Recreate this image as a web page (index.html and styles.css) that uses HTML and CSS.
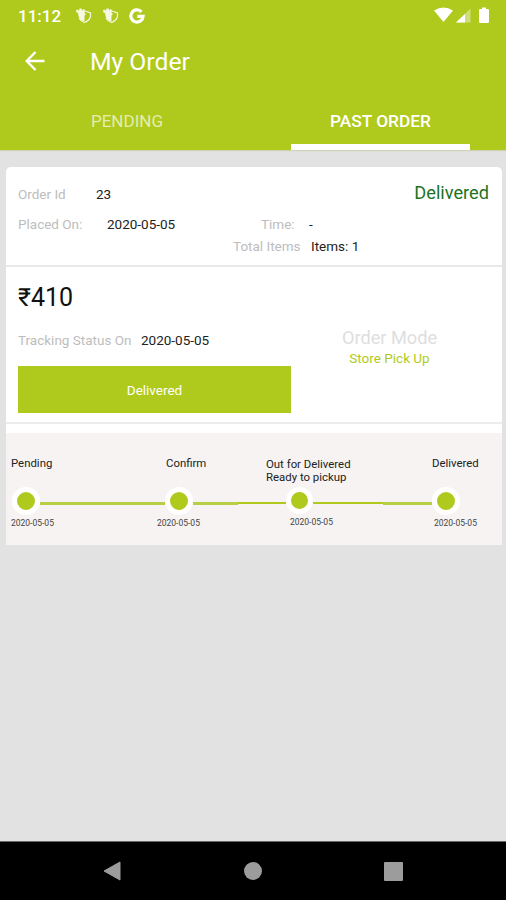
FILE: index.html
```html
<!DOCTYPE html>
<html lang="en">
<head>
<meta charset="utf-8">
<title>My Order</title>
<link rel="stylesheet" href="styles.css">
</head>
<body>
<div class="screen">
  <header class="header">
    <div class="status">
      <span class="clock">11:12</span>
      <svg class="shield" viewBox="0 0 18 18"><path d="M10 4 L15.500 6 V9.500 Q14.500 13.500 9.500 15.500 Q5.500 14 4 11" fill="none" stroke="#fff" stroke-width="1.200" opacity=".85"/><path d="M1 3 L3 2.500 L4 4 L4.500 1.500 L6.500 1.500 L7.500 3.500 L8.500 2 L10 3 L9.500 6 L11 7 L9.500 8.500 V14.500 Q4.500 13 3.500 9 L3 6 L1.500 5.500Z" fill="#fff" opacity=".88"/></svg>
      <svg class="shield" viewBox="0 0 18 18"><path d="M10 4 L15.500 6 V9.500 Q14.500 13.500 9.500 15.500 Q5.500 14 4 11" fill="none" stroke="#fff" stroke-width="1.200" opacity=".85"/><path d="M1 3 L3 2.500 L4 4 L4.500 1.500 L6.500 1.500 L7.500 3.500 L8.500 2 L10 3 L9.500 6 L11 7 L9.500 8.500 V14.500 Q4.500 13 3.500 9 L3 6 L1.500 5.500Z" fill="#fff" opacity=".88"/></svg>
      <svg class="google" viewBox="0 0 16 16"><path d="M12.500 3.900 A6.100 6.100 0 1 0 14.100 8.300 H8.300" fill="none" stroke="#fff" stroke-width="3.200"/></svg>
      <svg class="signals" viewBox="0 0 58 18"><path d="M0 3.500 Q9.500 -2.500 19 3.500 L9.500 15Z" fill="#fff"/><path d="M22 15.500 L36.500 1.500 V15.500Z" fill="#fff" opacity=".4"/><path d="M22 15.500 L31 7 V15.500Z" fill="#fff"/><path d="M48 .5 h4 v1.500 h2 q1 0 1 1 v12 q0 1 -1 1 h-8 q-1 0 -1 -1 v-12 q0 -1 1 -1 h2z" fill="#fff"/></svg>
    </div>
    <div class="toolbar">
      <svg class="back" viewBox="0 0 20 20"><path d="M19.500 10 H2 M10.500 1 L1.700 10 L10.500 19" fill="none" stroke="#fff" stroke-width="2.400"/></svg>
      <h1 class="title">My Order</h1>
    </div>
    <nav class="tabs">
      <span class="tab tab-pending"><span class="tab-label">PENDING</span></span>
      <span class="tab tab-active"><span class="tab-label">PAST ORDER</span></span>
    </nav>
  </header>
  <main class="content">
    <article class="card">
      <section class="summary">
        <div class="row row-id"><span class="label order-id">Order Id</span><span class="value">23</span><span class="state">Delivered</span></div>
        <div class="row row-placed"><span class="label placed">Placed On:</span><span class="value placed-date">2020-05-05</span><span class="label time">Time:</span><span class="value">-</span></div>
        <div class="row row-items"><span class="label total">Total Items</span><span class="value items">Items: 1</span></div>
      </section>
      <section class="payment">
        <div class="tracking">
          <div class="price">₹410</div>
          <div class="row row-track"><span class="label track-label">Tracking Status On</span><span class="value">2020-05-05</span></div>
          <div class="button">Delivered</div>
        </div>
        <div class="mode"><span class="mode-label">Order Mode</span><span class="mode-value">Store Pick Up</span></div>
      </section>
      <section class="timeline">
        <div class="step step-1">
          <div class="name"><span>Pending</span></div>
          <div class="track"><i class="dot"></i><i class="line grow"></i></div>
          <div class="date">2020-05-05</div>
        </div>
        <div class="step step-2">
          <div class="name"><span>Confirm</span></div>
          <div class="track"><i class="line lead"></i><i class="dot"></i><i class="line grow"></i></div>
          <div class="date">2020-05-05</div>
        </div>
        <div class="step step-3">
          <div class="name"><span>Out for Delivered</span><br><span class="ready">Ready to pickup</span></div>
          <div class="track"><i class="line lead"></i><i class="dot"></i><i class="line grow"></i></div>
          <div class="date">2020-05-05</div>
        </div>
        <div class="step step-4">
          <div class="name"><span>Delivered</span></div>
          <div class="track"><i class="line lead"></i><i class="dot"></i></div>
          <div class="date">2020-05-05</div>
        </div>
      </section>
    </article>
  </main>
  <footer class="navbar">
    <svg class="nav-back" viewBox="0 0 18 20"><path d="M17 1 V19 L1 10Z" fill="#9c9c9c" stroke="#9c9c9c" stroke-linejoin="round"/></svg>
    <span class="nav-home"></span>
    <span class="nav-recent"></span>
  </footer>
</div>
</body>
</html>
```

FILE: styles.css
```css
* { box-sizing: border-box; }
body { margin: 0; font-family: Roboto, "Noto Sans", sans-serif; color: #222; }
.screen { width: 506px; height: 900px; display: flex; flex-direction: column; background: #e2e2e2; overflow: hidden; }
.header { height: 150px; background: #afca1d; color: #fff; display: flex; flex-direction: column; flex: none; box-shadow: 0 1px 1px #cdd2b4; }
.status { height: 32px; display: flex; align-items: center; padding-left: 18px; }
.clock { font-size: 17px; font-weight: 500; width: 57px; }
.shield { width: 18px; height: 18px; margin-right: 9px; margin-top: -1px; }
.google { width: 16px; height: 16px; margin-top: -1px; }
.signals { width: 58px; height: 18px; margin-left: auto; margin-right: 14px; }
.toolbar { height: 60px; display: flex; align-items: center; padding-left: 25px; }
.back { width: 20px; height: 20px; margin: -2px 45px 0 0; }
.title { margin: 0; font-size: 24.700px; font-weight: 400; line-height: 30px; }
.tabs { height: 58px; display: flex; }
.tab { height: 58px; padding-top: 19px; text-align: center; font-size: 17px; line-height: 20px; }
.tab-pending { width: 254px; color: #e4edb2; }
.tab-active { width: 179px; margin-left: 37px; border-bottom: 6px solid #fff; font-size: 17.300px; font-weight: 500; }
.content { flex: 1; padding: 17px 4px 0 6px; }
.card { height: 378px; background: #fff; border-radius: 5px 5px 0 0; }
.summary { height: 100px; border-bottom: 2px solid #e8e8e8; padding: 15px 13px 0 12px; }
.row { display: flex; align-items: center; font-size: 13.500px; white-space: nowrap; }
.label { color: #bdbdbd; }
.row-id { height: 23px; }
.order-id { width: 78px; }
.state { margin: -2px 0 0 auto; font-size: 18.200px; color: #1c731f; }
.row-placed { height: 30px; padding-top: 7px; }
.placed { width: 89px; }
.placed-date { width: 154px; }
.time { width: 48px; }
.row-items { height: 22px; padding-left: 215px; }
.total { width: 78px; }
.payment { height: 157px; border-bottom: 2px solid #ececec; padding-left: 12px; display: flex; }
.tracking { width: 273px; }
.price { font-size: 25px; line-height: 30px; margin-top: 16px; color: #111; }
.row-track { height: 20px; margin-top: 17px; }
.track-label { width: 123px; }
.button { height: 47px; margin-top: 16px; background: #afca1d; color: #fff; font-size: 13.500px; line-height: 48px; text-align: center; }
.mode { width: 197px; padding-top: 60px; display: flex; flex-direction: column; align-items: center; }
.mode-label { font-size: 18.200px; line-height: 21px; color: #dedede; }
.mode-value { font-size: 13.500px; line-height: 21px; color: #afca1d; }
.timeline { height: 112px; margin-top: 9px; background: #f6f3f2; display: flex; }
.step { padding-top: 24px; }
.step-1 { width: 106px; }
.step-2 { width: 126px; }
.step-3 { width: 145px; }
.step-4 { width: 119px; }
.name { height: 30px; font-size: 11.400px; line-height: 13px; white-space: nowrap; }
.step-1 .name, .step-1 .date { padding-left: 5px; }
.step-2 .name { padding-left: 54px; }
.step-3 .name { padding-left: 28px; padding-top: 1px; }
.step-4 .name { padding-left: 49px; }
.track { height: 28px; display: flex; align-items: center; }
.dot { flex: none; width: 28px; height: 28px; border-radius: 50%; border: 5px solid #fff; background: #afca1d; }
.line { height: 3px; background: #b7cf45; margin-top: 5px; }
.grow { flex: 1; }
.step-1 .track { padding-left: 6px; }
.step-2 .lead { width: 53px; }
.step-3 .lead { width: 48px; }
.step-4 .lead { width: 49px; }
.step-3 .track { height: 26px; }
.step-3 .dot { width: 27px; height: 27px; border-width: 5.500px; }
.step-3 .line { height: 2px; background: #afca1d; }
.date { font-size: 8.500px; line-height: 12px; margin-top: 2px; color: #444; }
.step-2 .date { padding-left: 45px; }
.step-3 .date { padding-left: 52px; margin-top: 3px; }
.step-4 .date { padding-left: 51px; }
.navbar { height: 59px; background: #000; border-top: 1px solid #666; display: flex; align-items: center; padding-left: 103px; flex: none; }
.nav-back { width: 18px; height: 20px; }
.nav-home { width: 18px; height: 18px; border-radius: 50%; background: #9c9c9c; margin-left: 123px; }
.nav-recent { width: 19px; height: 19px; border-radius: 1px; background: #9c9c9c; margin-left: 122px; }
```
